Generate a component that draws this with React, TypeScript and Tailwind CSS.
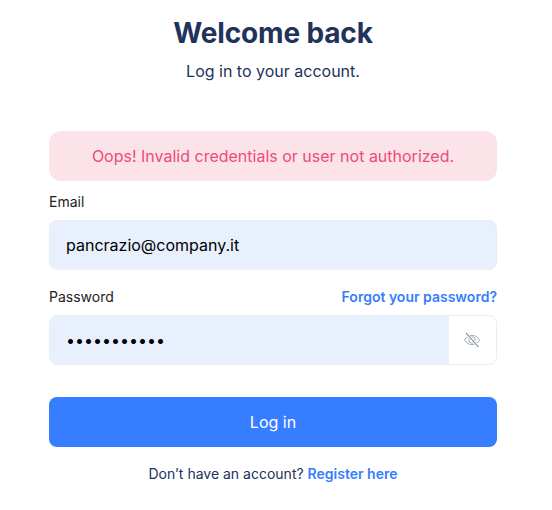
import { useState } from "react";

const EyeSlash = () => (
  <svg viewBox="0 0 16 16" className="w-4 h-4" fill="none">
    <path
      d="M0.500 8C2.200 5 4.900 3.400 8 3.400s5.800 1.600 7.500 4.600c-1.700 3-4.400 4.600-7.500 4.600S2.200 11 0.500 8z"
      stroke="#a3adb7"
      strokeWidth="1"
    />
    <circle cx="8" cy="8" r="3.200" stroke="#a3adb7" strokeWidth="1" />
    <path d="M2 0.800 14.400 15" stroke="#ffffff" strokeWidth="2.600" />
    <path d="M2 0.800 14.400 15" stroke="#7d8994" strokeWidth="1.100" />
  </svg>
);

export default function App() {
  const [email, setEmail] = useState("pancrazio@company.it");
  const [password, setPassword] = useState("Password123");

  return (
    <div className="w-[552px] h-[510px] bg-white font-['Inter',sans-serif] pl-[49px] pr-[55px] pt-[15px] overflow-hidden">
      <div className="flex flex-col items-center mb-[48px]">
        <h1 className="text-[28px] leading-[36px] font-bold tracking-[-0.15px] text-[#21325b] mb-[8px]">
          Welcome back
        </h1>
        <p className="text-base leading-[24px] text-[#21325b]">
          Log in to your account.
        </p>
      </div>

      <div className="h-[50px] flex items-center justify-center rounded-xl bg-[#fbe3e9] text-base text-[#ed4c78] mb-[11px]">
        Oops! Invalid credentials or user not authorized.
      </div>

      <form>
        <label className="block text-sm leading-[20px] text-[#1e2022] mb-2">
          Email
        </label>
        <input
          type="email"
          value={email}
          onChange={(e) => setEmail(e.target.value)}
          className="block w-full h-[50px] px-4 rounded-lg border border-[#e9ecf2] bg-[#e8f0fe] text-base text-black outline-none mb-[17px]"
        />

        <div className="flex items-center justify-between mb-2">
          <label className="text-sm leading-[20px] text-[#1e2022]">
            Password
          </label>
          <a href="#" className="text-sm leading-[20px] font-semibold text-[#377dff]">
            Forgot your password?
          </a>
        </div>
        <div className="flex h-[50px] rounded-lg border border-[#e9ecf2] overflow-hidden mb-8">
          <input
            type="password"
            value={password}
            onChange={(e) => setPassword(e.target.value)}
            className="flex-1 min-w-0 px-4 bg-[#e8f0fe] text-base text-black outline-none"
          />
          <button type="button" className="w-[47px] pr-[2px] flex items-center justify-center bg-white">
            <EyeSlash />
          </button>
        </div>

        <button type="button" className="block w-full h-[50px] rounded-lg bg-[#377dff] text-base text-white mb-[15px]">
          Log in
        </button>

        <p className="text-sm leading-[24px] text-center text-[#21325b]">
          Don’t have an account?{" "}
          <a href="#" className="font-semibold text-[#377dff]">
            Register here
          </a>
        </p>
      </form>
    </div>
  );
}
